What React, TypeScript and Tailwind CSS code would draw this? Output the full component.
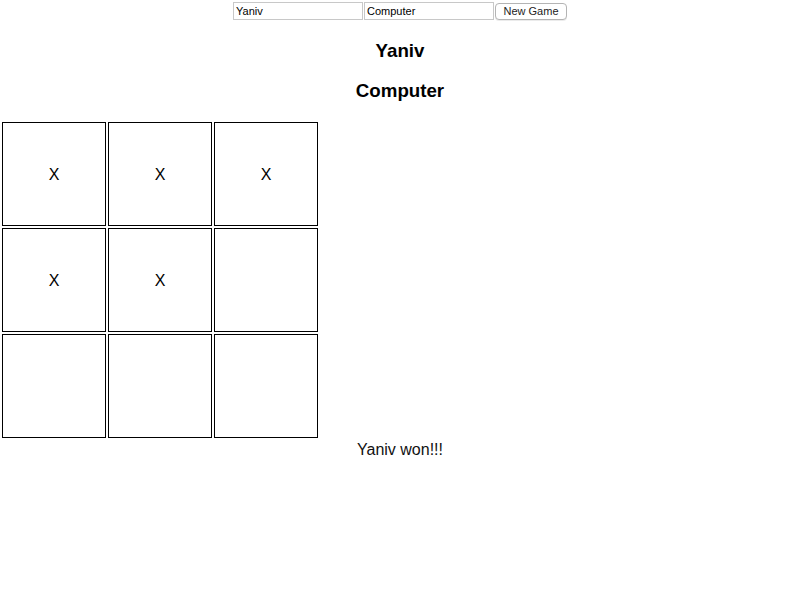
import React from "react";

export default function App() {
  const board = ["X", "X", "X", "X", "X", "", "", "", ""];
  return (
    <div className="bg-white w-[800px] h-[600px] text-black" style={{ fontFamily: "'Liberation Sans', Arial, sans-serif" }}>
      <div className="flex justify-center pt-[2px] h-[21px]">
        <input
          defaultValue="Yaniv"
          className="w-[130px] h-[18px] border border-[#c8c8c8] px-[2px] text-[11px] leading-[16px] text-black outline-none"
        />
        <input
          defaultValue="Computer"
          className="w-[130px] h-[18px] ml-[1px] border border-[#c8c8c8] px-[2px] text-[11px] leading-[16px] text-black outline-none"
        />
        <button className="ml-[1px] mt-[1px] h-[17px] w-[72px] border border-[#b4b4b4] rounded-[4px] bg-white text-[11px] leading-[15px] text-[#222] shadow-[0_1px_0_rgba(0,0,0,0.08)]">
          New Game
        </button>
      </div>
      <h3 className="text-center font-bold text-[18.72px] leading-[22px] mt-[18.72px]">Yaniv</h3>
      <h3 className="text-center font-bold text-[18.72px] leading-[22px] mt-[18.72px]">Computer</h3>
      <div className="mt-[19.72px] pl-[2px] grid grid-cols-[104px_104px_104px] gap-[2px] w-[320px]">
        {board.map((v, i) => (
          <div key={i} className="w-[104px] h-[104px] border border-black flex items-center justify-center pt-[2px] text-[16px]">
            {v}
          </div>
        ))}
      </div>
      <div className="text-center text-[16px] leading-[22px] mt-[1px] text-[#111]">Yaniv won!!!</div>
    </div>
  );
}
